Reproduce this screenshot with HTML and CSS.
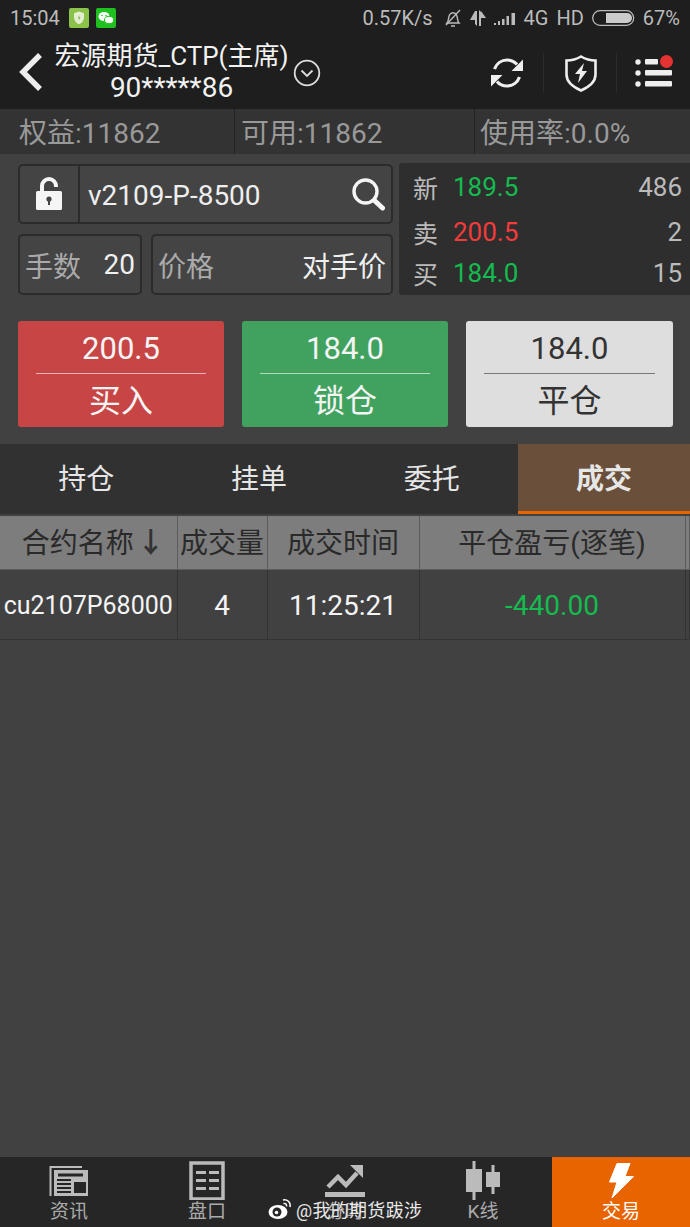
FILE: index.html
```html
<!DOCTYPE html>
<html lang="zh-CN">
<head>
  <meta charset="UTF-8">
  <meta name="viewport" content="width=device-width, initial-scale=1.0">
  <title>交易</title>
  <link rel="stylesheet" href="styles.css">
</head>
<body>
  <div class="top">
    <div class="status">
      <span class="time">15:04</span>
      <svg class="app-icon" width="20" height="20" viewBox="0 0 20 20"><rect width="20" height="20" rx="2" fill="#8bc34a"/><path d="M10 3.500l5 1.800v4c0 3.400-2.200 5.800-5 7-2.800-1.200-5-3.600-5-7v-4z" fill="#e4efd2"/><path d="M10.500 7L8.800 10.300h1.400L9.500 13l2-3.600h-1.300z" fill="#7ea845"/></svg>
      <svg class="app-icon" width="20" height="20" viewBox="0 0 20 20"><rect width="20" height="20" rx="2" fill="#1fc01f"/><ellipse cx="8" cy="8.500" rx="5.500" ry="4.500" fill="#fff"/><ellipse cx="13" cy="12" rx="4.500" ry="3.700" fill="#fff" stroke="#1fc01f"/><circle cx="6" cy="7.500" r=".8" fill="#1fc01f"/><circle cx="10" cy="7.500" r=".8" fill="#1fc01f"/></svg>
      <span class="status-right">
        <span class="speed">0.57K/s</span>
        <svg width="18" height="20" viewBox="0 0 18 20" fill="none" stroke="#bbb" stroke-width="1.400"><path d="M3 15c2-2 1-5 2.500-8 1.500-3 5.500-3 7 0 1.500 3 .5 6 2.500 8z"/><path d="M7 18h4M2 17L16 2"/></svg>
        <svg width="16" height="18" viewBox="0 0 16 18" fill="#bbb"><path d="M5 2h2v15L5 15v-4H0zM9 1l2 2v5h5l-5 0v9H9z"/><path d="M11 2l5 7h-5z"/></svg>
        <svg width="22" height="14" viewBox="0 0 22 14" fill="#bbb"><path d="M0 12h2v2H0zM4 10h2v4H4zM8 8h2.500v6H8zM12.500 5H15v9h-2.500zM17.500 2H21v12h-3.500z"/></svg>
        <span>4G</span>
        <span>HD</span>
        <svg width="43" height="16" viewBox="0 0 43 16"><rect x=".7" y=".7" width="41" height="14.600" rx="7.300" fill="none" stroke="#bbb" stroke-width="1.300"/><path d="M14 3h21a5 5 0 0 1 0 10H14z" fill="#ccc"/></svg>
        <span>67%</span>
      </span>
    </div>
    <div class="header">
      <svg class="back" width="26" height="40" viewBox="0 0 26 40" fill="none" stroke="#eee" stroke-width="5.500"><path d="M22 3L5 20l17 17"/></svg>
      <div class="account">
        <div class="account-name">宏源期货_CTP(主席)</div>
        <div class="account-id">90*****86</div>
      </div>
      <svg class="more" width="28" height="28" viewBox="0 0 28 28" fill="none" stroke="#ddd" stroke-width="1.800"><circle cx="14" cy="14" r="12.300"/><path d="M8.500 11.500l5.500 5.500 5.500-5.500"/></svg>
      <div class="header-icons">
        <svg width="36" height="36" viewBox="0 0 36 36" fill="none" stroke="#eee" stroke-width="3.200"><path d="M5.500 14C7.500 8.500 12.500 5 18 5c4 0 7.500 1.500 10 4.500"/><path d="M30.500 22C28.500 27.500 23.500 31 18 31c-4 0-7.500-1.500-10-4.500"/><path d="M34 4.500V16H22.500z" fill="#eee" stroke="none"/><path d="M2 31.500V20h11.500z" fill="#eee" stroke="none"/></svg>
        <span class="divider"></span>
        <svg class="shield" width="34" height="38" viewBox="0 0 34 38"><path d="M17 2.500C22 5.500 27 6.500 31.500 6.500v14C31.500 28 25 33 17 36.500 9 33 2.500 28 2.500 20.500v-14C7 6.500 12 5.500 17 2.500z" fill="none" stroke="#eee" stroke-width="2.600"/><path d="M20 9L11 20h5l-2 9 9-12h-5z" fill="#eee"/></svg>
        <span class="divider"></span>
        <svg width="38" height="36" viewBox="0 0 38 36"><g fill="#eee"><circle cx="3" cy="7" r="2.700"/><circle cx="3" cy="18" r="2.700"/><circle cx="3" cy="29" r="2.700"/><rect x="10" y="4" width="13" height="5.500" rx="1"/><rect x="10" y="15" width="27" height="5.500" rx="1"/><rect x="10" y="26" width="27" height="5.500" rx="1"/></g><circle cx="31.500" cy="6.500" r="6.500" fill="#e53232"/></svg>
      </div>
    </div>
  </div>

  <div class="summary">
    <div class="summary-cell cell-equity">权益:11862</div>
    <div class="summary-cell cell-free">可用:11862</div>
    <div class="summary-cell cell-rate">使用率:0.0%</div>
  </div>

  <div class="order">
    <div class="order-left">
      <div class="box contract">
        <div class="lock">
          <svg width="30" height="34" viewBox="0 0 30 34"><path d="M8 14V9a7 7 0 0 1 14 0v1" fill="none" stroke="#f5f5f5" stroke-width="4"/><rect x="2" y="14" width="26" height="19" rx="1.500" fill="#f5f5f5"/><circle cx="15" cy="22" r="2.600" fill="#444"/><rect x="14" y="23" width="2" height="5" fill="#444"/></svg>
        </div>
        <span class="contract-code">v2109-P-8500</span>
        <svg class="search" width="34" height="34" viewBox="0 0 34 34" fill="none" stroke="#f5f5f5"><circle cx="14.500" cy="14.500" r="11.500" stroke-width="3.400"/><path d="M24 24l7.500 7" stroke-width="5" stroke-linecap="round"/></svg>
      </div>
      <div class="order-row">
        <div class="box field field-lots"><span class="field-label">手数</span><span class="field-value">20</span></div>
        <div class="box field field-price"><span class="field-label">价格</span><span class="field-value">对手价</span></div>
      </div>
    </div>
    <div class="quote">
      <div class="quote-row"><span class="quote-label">新</span><span class="quote-price up">189.5</span><span class="quote-size">486</span></div>
      <div class="quote-row"><span class="quote-label">卖</span><span class="quote-price down">200.5</span><span class="quote-size">2</span></div>
      <div class="quote-row"><span class="quote-label">买</span><span class="quote-price up">184.0</span><span class="quote-size">15</span></div>
    </div>
  </div>

  <div class="actions">
    <div class="action buy"><div class="action-price">200.5</div><div class="action-name">买入</div></div>
    <div class="action lock-pos"><div class="action-price">184.0</div><div class="action-name">锁仓</div></div>
    <div class="action close"><div class="action-price">184.0</div><div class="action-name">平仓</div></div>
  </div>

  <div class="tabs">
    <div class="tab">持仓</div>
    <div class="tab">挂单</div>
    <div class="tab">委托</div>
    <div class="tab active">成交</div>
  </div>

  <table class="trades">
    <thead>
      <tr>
        <th class="col-name">合约名称<span class="arrow">↓</span></th>
        <th class="col-vol">成交量</th>
        <th class="col-time">成交时间</th>
        <th class="col-pnl">平仓盈亏(逐笔)</th>
        <th></th>
      </tr>
    </thead>
    <tbody>
      <tr>
        <td class="contract-cell">cu2107P68000</td>
        <td>4</td>
        <td>11:25:21</td>
        <td class="pnl">-440.00</td>
        <td></td>
      </tr>
    </tbody>
  </table>

  <div class="spacer"></div>

  <nav class="bottom">
    <div class="nav-item">
      <svg width="40" height="32" viewBox="0 0 40 32"><path d="M1.500 31V2H33" fill="none" stroke="#bbb" stroke-width="2"/><rect x="5" y="5" width="34" height="26" fill="#bbb"/><g fill="#262626"><rect x="9" y="8.500" width="25" height="3"/><rect x="8" y="14" width="14" height="2"/><rect x="8" y="18" width="14" height="2"/><rect x="8" y="22" width="14" height="2"/><rect x="8" y="26" width="14" height="2"/><rect x="25" y="17" width="12" height="11"/></g></svg>
      <span>资讯</span>
    </div>
    <div class="nav-item">
      <svg width="36" height="39" viewBox="0 0 36 39"><rect x="2" y="2" width="32" height="36" fill="none" stroke="#bbb" stroke-width="3.500"/><g fill="#bbb"><rect x="7" y="10" width="10" height="3"/><rect x="20" y="10" width="10" height="3"/><rect x="7" y="18" width="10" height="3"/><rect x="20" y="18" width="10" height="3"/><rect x="7" y="26" width="10" height="3"/><rect x="20" y="26" width="10" height="3"/></g></svg>
      <span>盘口</span>
    </div>
    <div class="nav-item">
      <svg width="40" height="34" viewBox="0 0 40 34" fill="none" stroke="#bbb"><path d="M3 23l10-10 8 8 11-12" stroke-width="4.500"/><path d="M25 1h13v13z" fill="#bbb" stroke="none"/><path d="M0 30.500h40" stroke-width="5"/></svg>
      <span>分时</span>
    </div>
    <div class="nav-item">
      <svg width="36" height="39" viewBox="0 0 36 39" fill="#bbb"><rect x="1" y="8" width="16" height="23"/><rect x="7.500" y="0" width="3" height="39"/><rect x="21" y="11" width="14" height="15"/><rect x="26.500" y="4" width="3" height="29"/></svg>
      <span>K线</span>
    </div>
    <div class="nav-item active">
      <svg width="27" height="38" viewBox="0 0 27 38"><path d="M9 1.500h13l-5 13h8.500L4 36l5-16H1.500z" fill="#fff" stroke="#fff" stroke-linejoin="round"/></svg>
      <span>交易</span>
    </div>
  </nav>

  <div class="watermark">
    <svg width="24" height="22" viewBox="0 0 24 22"><ellipse cx="10" cy="14" rx="9.500" ry="7" fill="#fff"/><circle cx="9" cy="14" r="4.500" fill="#262626"/><circle cx="8.500" cy="14.500" r="1.800" fill="#fff"/><path d="M15 2c4-1 8 2 7 7M15.500 5.500c2-.5 3.500 1 3 3" fill="none" stroke="#fff" stroke-width="1.500"/></svg>
    <span>@我的期货跋涉</span>
  </div>
</body>
</html>
```

FILE: styles.css
```css
* {
  box-sizing: border-box;
}
html, body {
  height: 100%;
}
body {
  margin: 0;
  position: relative;
  display: flex;
  flex-direction: column;
  background-color: #414141;
  font-family: Roboto, "Noto Sans CJK SC", sans-serif;
  overflow: hidden;
}
.up {
  color: #14bb4e;
}
.down {
  color: #f23b3b;
}

/* status bar and title */
.top {
  background-color: #1e1e1e;
  height: 109px;
}
.status {
  height: 36px;
  display: flex;
  align-items: center;
  padding: 0 10px;
  gap: 7px;
  font-size: 20px;
  color: #bbb;
}
.time {
  margin-right: 2px;
}
.status-right {
  margin-left: auto;
  display: flex;
  align-items: center;
  gap: 8px;
}
.speed {
  margin-right: 3px;
}
.header {
  height: 73px;
  display: flex;
  align-items: center;
  padding-left: 18px;
}
.back {
  margin-top: -2px;
}
.account {
  width: 235px;
  margin: -2px 0 0 10px;
  text-align: center;
  color: #f2f2f2;
  line-height: 32px;
  white-space: nowrap;
}
.account-name {
  font-size: 26px;
}
.account-id {
  font-size: 28px;
}
.more {
  margin-left: 4px;
}
.header-icons {
  margin-left: auto;
  display: flex;
  align-items: center;
  padding-right: 17px;
  gap: 18px;
}
.shield {
  margin-left: 2px;
}
.divider {
  width: 1px;
  height: 40px;
  background-color: #2c2c2c;
}

/* account summary */
.summary {
  height: 45px;
  display: flex;
  background-color: #333;
  color: #999;
  font-size: 28px;
  line-height: 49px;
}
.summary-cell {
  border-right: 1px solid #222;
  white-space: nowrap;
}
.cell-equity {
  width: 235px;
  padding-left: 19px;
}
.cell-free {
  width: 240px;
  padding-left: 6px;
}
.cell-rate {
  flex: 1;
  padding-left: 5px;
  border-right: 0;
}

/* order form */
.order {
  display: flex;
  padding: 9px 0 0 18px;
  gap: 6px;
  height: 141px;
}
.order-left {
  width: 375px;
  display: flex;
  flex-direction: column;
  gap: 10px;
  padding-top: 1px;
}
.box {
  border: 2px solid #2b2b2b;
  border-radius: 5px;
  background-color: #444;
}
.contract {
  height: 60px;
  display: flex;
  align-items: center;
}
.lock {
  width: 60px;
  height: 100%;
  border-right: 2px solid #2b2b2b;
  display: flex;
  align-items: center;
  justify-content: center;
}
.contract-code {
  flex: 1;
  padding: 2px 0 0 8px;
  font-size: 28px;
  color: #eee;
}
.search {
  margin-right: 6px;
}
.order-row {
  display: flex;
  gap: 9px;
}
.field {
  height: 61px;
  display: flex;
  align-items: center;
  justify-content: space-between;
  padding: 0 5px;
  font-size: 28px;
}
.field-lots {
  width: 124px;
}
.field-price {
  flex: 1;
}
.field-label {
  color: #aaa;
}
.field-value {
  color: #f0f0f0;
}
.quote {
  flex: 1;
  height: 132px;
  background-color: #2e2e2e;
  border-radius: 3px 0 0 3px;
  padding: 3px 8px 0 14px;
  font-size: 26px;
}
.quote-row {
  display: flex;
  align-items: center;
  height: 42px;
}
.quote-row:nth-child(2) {
  height: 48px;
}
.quote-row:nth-child(3) {
  height: 34px;
}
.quote-label {
  color: #bbb;
  font-size: 25px;
  width: 40px;
}
.quote-size {
  margin-left: auto;
  color: #bbb;
}

/* buy and sell buttons */
.actions {
  display: flex;
  gap: 18px;
  padding: 26px 0 0 18px;
}
.action {
  width: 206px;
  height: 106px;
  border-radius: 3px;
  padding: 0 18px;
  text-align: center;
  color: #f4f4f4;
}
.action-price {
  height: 53px;
  line-height: 55px;
  font-size: 31px;
  border-bottom: 1px solid rgba(255, 255, 255, .6);
}
.action-name {
  line-height: 55px;
  font-size: 32px;
}
.buy {
  background-color: #c84545;
}
.lock-pos {
  background-color: #41a25f;
}
.close {
  width: 207px;
  background-color: #dedede;
  color: #333;
}
.close .action-price {
  border-bottom-color: #777;
}

/* tabs */
.tabs {
  margin-top: 17px;
  display: flex;
  height: 70px;
  background-color: #313131;
}
.tab {
  flex: 1;
  text-align: center;
  line-height: 71px;
  font-size: 28px;
  color: #e6e6e6;
}
.tab.active {
  flex: none;
  width: 172px;
  background-color: #6a4f3a;
  border-bottom: 3px solid #e86400;
  font-weight: 700;
}

/* trades table */
.trades {
  margin-top: 2px;
  width: 100%;
  table-layout: fixed;
  border-collapse: collapse;
}
.trades th, .trades td {
  padding: 0;
  text-align: center;
  white-space: nowrap;
  border-right: 1px solid #333;
}
.trades th {
  height: 53px;
  padding-bottom: 2px;
  background-color: #7d7d7d;
  border-right-color: #5c5c5c;
  border-bottom: 1px solid #5c5c5c;
  color: #2a2a2a;
  font-size: 28px;
  font-weight: 400;
}
.trades td {
  height: 70px;
  padding-top: 3px;
  border-bottom: 1px solid #333;
  color: #f4f4f4;
  font-size: 28px;
}
.trades .contract-cell {
  font-size: 25px;
}
.trades .pnl {
  color: #14bb4e;
}
.trades .col-name {
  width: 177px;
  padding-left: 10px;
}
.col-vol {
  width: 90px;
}
.col-time {
  width: 152px;
}
.col-pnl {
  width: 266px;
}
.arrow {
  margin-left: 3px;
  font-weight: 700;
  color: #333;
}
.spacer {
  flex: 1;
}

/* bottom navigation */
.bottom {
  height: 70px;
  display: flex;
  background-color: #262626;
}
.nav-item {
  flex: 1;
  display: flex;
  flex-direction: column;
  align-items: center;
  padding: 4px 0 3px;
  font-size: 19px;
  line-height: 24px;
  color: #aaa;
}
.nav-item svg {
  margin: auto 0;
}
.nav-item.active {
  background-color: #e86400;
  color: #fff;
}
.watermark {
  position: absolute;
  left: 268px;
  bottom: 5px;
  display: flex;
  align-items: center;
  gap: 4px;
  font-size: 18px;
  letter-spacing: .3px;
  color: #e8e8e8;
}
```
